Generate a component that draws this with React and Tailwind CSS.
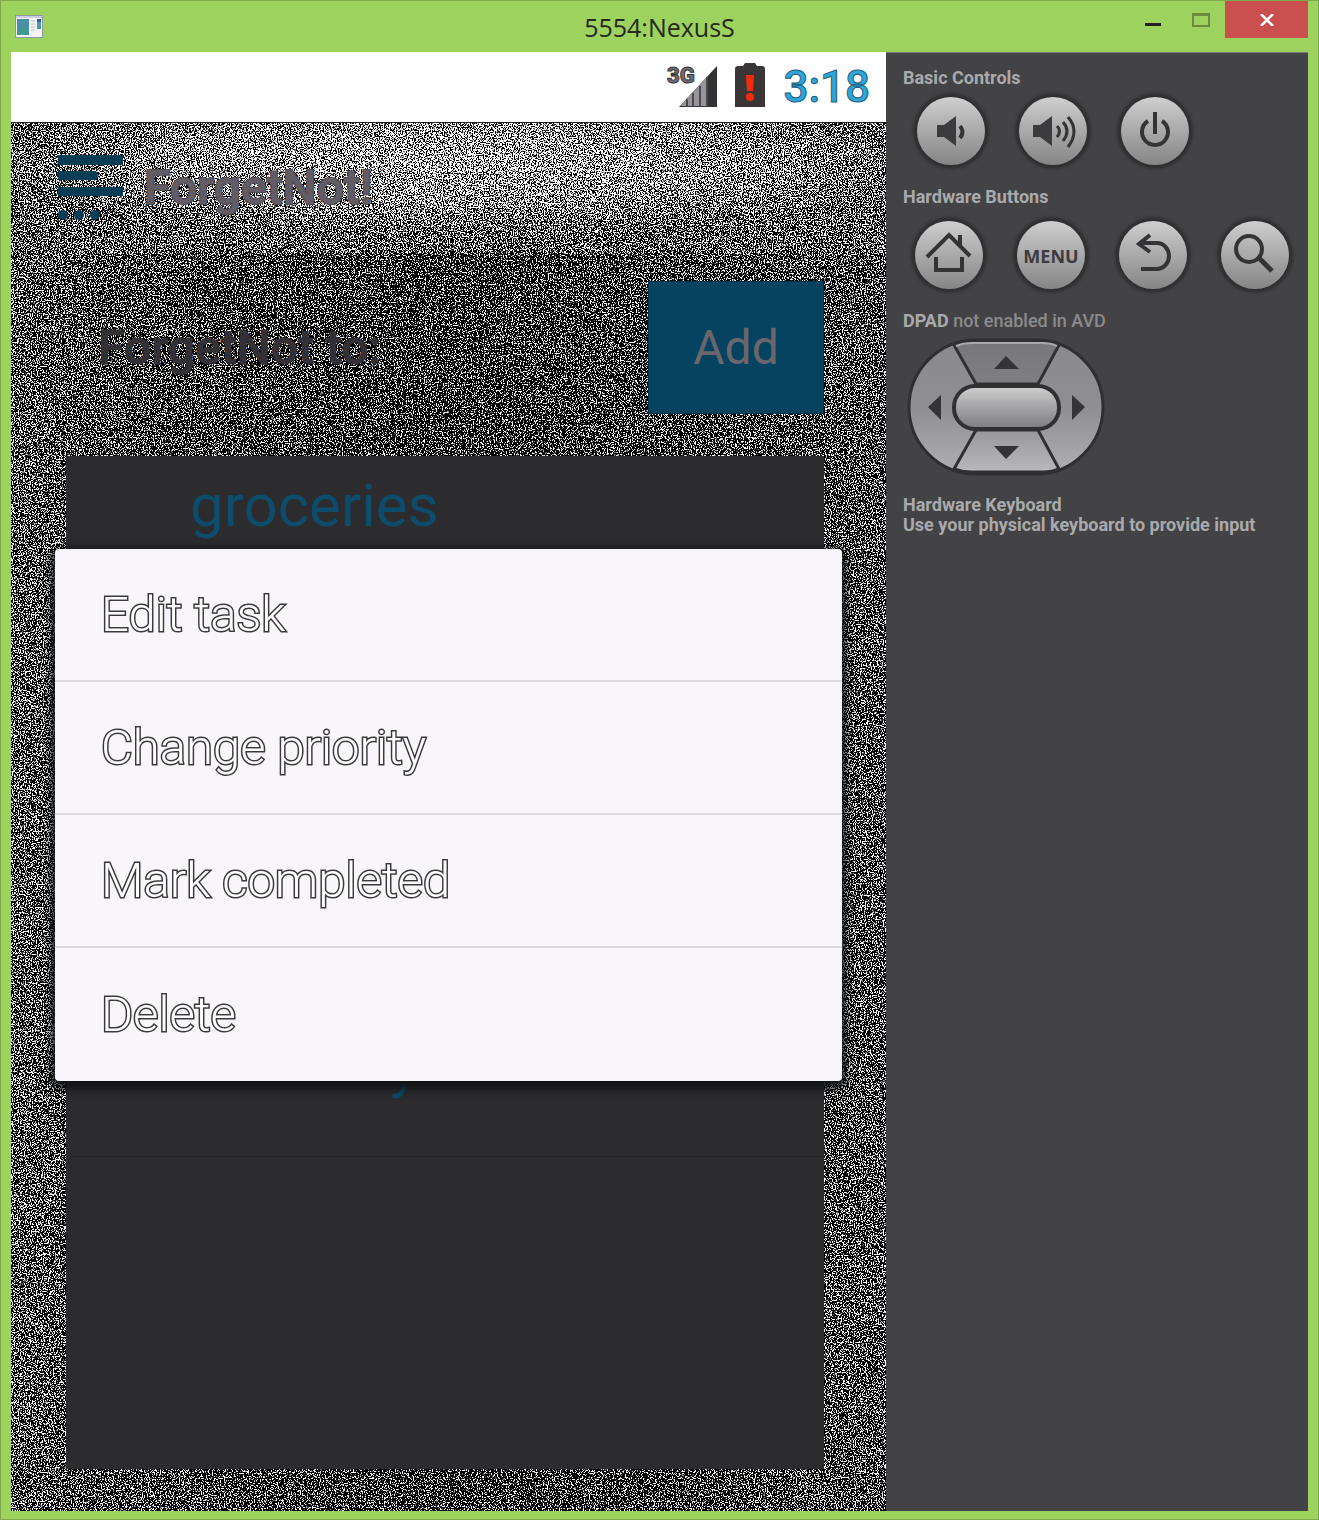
import React from "react";

const glyph = {
  fill: "none",
  stroke: "#343436",
  strokeWidth: 4,
};

function Grain() {
  return (
    <svg className="absolute inset-0 h-full w-full" aria-hidden="true">
      <defs>
        <filter id="grain" x="0" y="0" width="100%" height="100%" colorInterpolationFilters="sRGB">
          <feTurbulence type="fractalNoise" baseFrequency="0.83" numOctaves="2" seed="4" result="n" />
          <feColorMatrix in="n" type="matrix" values="1 0 0 0 0  1 0 0 0 0  1 0 0 0 0  0 0 0 0 1" result="g" />
          <feComposite in="g" in2="SourceGraphic" operator="arithmetic" k1="0" k2="1" k3="1" k4="-0.5" />
          <feComponentTransfer>
            <feFuncR type="linear" slope="14" intercept="-6.5" />
            <feFuncG type="linear" slope="14" intercept="-6.5" />
            <feFuncB type="linear" slope="14" intercept="-6.5" />
          </feComponentTransfer>
        </filter>
        <radialGradient id="headShade" cx="0.52" cy="0.3" r="0.55">
          <stop offset="0" stopColor="#898989" />
          <stop offset="0.6" stopColor="#828282" />
          <stop offset="1" stopColor="#777777" />
        </radialGradient>
        <linearGradient id="bodyShade" x1="0" x2="1" y1="0" y2="0">
          <stop offset="0" stopColor="#757575" />
          <stop offset="0.1" stopColor="#717171" />
          <stop offset="0.5" stopColor="#6b6b6b" />
          <stop offset="0.95" stopColor="#727272" />
          <stop offset="1" stopColor="#727272" />
        </linearGradient>
      </defs>
      <g filter="url(#grain)">
        <rect width="100%" height="100%" fill="url(#bodyShade)" />
        <rect width="100%" height="130" fill="url(#headShade)" />
      </g>
    </svg>
  );
}

function TitleBar() {
  return (
    <header className="grid h-[51px] grid-cols-[1fr_auto_1fr] items-start">
      <svg width="28" height="23" viewBox="0 0 28 23" className="mt-3.5 ml-1" aria-hidden="true">
        <rect x="0.5" y="0.5" width="27" height="22" fill="#f4f4f8" stroke="#8d98a0" />
        <rect x="1" y="1" width="26" height="2" fill="#c9cfe0" />
        <rect x="2" y="4" width="12" height="16" fill="#43988f" />
        <path d="M2 4h12v7L2 17z" fill="#4a8fa4" />
        <path d="M16 6h4M16 9h4M16 12h4M16 15h4" stroke="#b9bdc4" />
        <rect x="22" y="4" width="4" height="10" fill="#4a9aa5" />
        <rect x="22" y="4" width="4" height="3" fill="#2c5f9c" />
      </svg>
      <h1 className="mt-2 font-['Open_Sans',sans-serif] text-[25px] leading-9 text-[#252a1c]">5554:NexusS</h1>
      <div className="flex justify-end">
        <button aria-label="Minimize" className="flex h-[37px] w-12 items-center justify-center">
          <svg width="16" height="12" viewBox="0 0 16 12"><path d="M0 10.500h16" stroke="#222" strokeWidth="3" /></svg>
        </button>
        <button aria-label="Maximize" className="flex h-[37px] w-12 items-center justify-center">
          <svg width="18" height="14" viewBox="0 0 18 14"><path d="M1 1h16v12H1zM1 2h16" fill="none" stroke="#6b8c3e" strokeWidth="2" /></svg>
        </button>
        <button aria-label="Close" className="flex h-[37px] w-[83px] items-center justify-center bg-[#cc4f50]">
          <svg width="14" height="12" viewBox="0 0 14 12"><path d="M1 0l12 12M13 0L1 12" stroke="#fff" strokeWidth="2.500" /></svg>
        </button>
      </div>
    </header>
  );
}

function StatusBar() {
  return (
    <div className="flex h-[70px] items-center justify-end bg-white pr-4">
      <svg width="52" height="48" viewBox="0 0 52 48" role="img" aria-label="3G signal">
        <text x="0" y="20" fontFamily="Roboto, sans-serif" fontWeight="900" fontSize="22" fill="#6f6a70" stroke="#3a383b">3G</text>
        <path d="M12 44L50 3v41z" fill="#333335" />
        <path d="M13 43L40 14v29z" fill="#98959a" />
        <path d="M20 36v8M26 30v14M33 23v21M40 14v30" stroke="#4b494d" strokeWidth="2" />
      </svg>
      <svg width="30" height="44" viewBox="0 0 30 44" className="mb-1 ml-4" role="img" aria-label="Battery low">
        <path d="M0 6q0-3 3-3h5l2-3h10l2 3h5q3 0 3 3v38H0z" fill="#3a3638" />
        <path d="M11 12h8l-1 16h-6z" fill="#f8290a" />
        <circle cx="15" cy="34" r="4" fill="#f8290a" />
      </svg>
      <span className="ml-[18px] font-[Roboto,sans-serif] text-[44px] font-medium text-[#2fa5d8] [-webkit-text-stroke:1px_#205f80]">3:18</span>
    </div>
  );
}

const menuItems = ["Edit task", "Change priority", "Mark completed", "Delete"];

function ContextMenu() {
  return (
    <div role="menu" className="absolute inset-x-11 top-[426px] overflow-hidden rounded bg-[#f8f6fa] shadow-[0_4px_10px_4px_#101214]">
      {menuItems.map((label) => (
        <button
          key={label}
          role="menuitem"
          className="flex h-[133px] w-full items-center border-b-2 border-[#dcd9dd] px-[46px] text-left text-[49px] font-light text-white [-webkit-text-stroke:3px_#3a3a3e] [paint-order:stroke_fill] last:border-b-0"
        >
          {label}
        </button>
      ))}
    </div>
  );
}

function Phone() {
  return (
    <section className="flex min-w-0 flex-col font-[Roboto,sans-serif]">
      <StatusBar />
      <div className="relative flex flex-1 flex-col border-t border-[#222] bg-[#1a1a1a]">
        <Grain />
        <div className="relative flex h-[130px] items-center gap-5 pl-[47px]">
          <svg width="66" height="66" viewBox="0 0 66 66" fill="#083d58" aria-hidden="true">
            <rect width="65" height="10" />
            <path d="M0 16h38q4 4 0 9H0zM0 32h65v9H0z" />
            <circle cx="5" cy="60" r="5" />
            <circle cx="21" cy="60" r="5" />
            <circle cx="37" cy="60" r="5" />
          </svg>
          <h2 className="text-5xl font-medium text-[#625c65] [-webkit-text-stroke:2px_#4d4950] [paint-order:stroke_fill]">ForgetNot!</h2>
        </div>
        <div className="relative mx-[55px] mt-7 flex h-[133px] items-center justify-between pr-[7px] pl-8">
          <span className="text-5xl font-medium text-[#343136] [-webkit-text-stroke:1px_#2b292d] [paint-order:stroke_fill]">ForgetNot to:</span>
          <button className="h-[133px] w-44 border border-[#04304a] bg-[#064361] text-5xl text-[#6b666d]">Add</button>
        </div>
        <ul className="relative mt-[42px] mr-[62px] mb-[42px] ml-[55px] flex-1 bg-[#2c2b2e] text-[60px] leading-[70px] text-[#0d4c6b]">
          <li className="h-[140px] border-b border-[#252527] pt-[15px] pl-[124px]">groceries</li>
          <li className="h-[140px] border-b border-[#252527]" />
          <li className="h-[140px] border-b border-[#252527]" />
          <li className="h-[140px] border-b border-[#252527]" />
          <li className="h-[141px] border-b border-[#252527] pt-[15px] pl-[324px]">y</li>
        </ul>
        <ContextMenu />
      </div>
    </section>
  );
}

function RoundButton({ label, children }) {
  return (
    <button
      aria-label={label}
      className="flex size-[68px] items-center justify-center rounded-full bg-linear-to-b from-[#cfcfcf] to-[#858585] shadow-[0_0_3px_4px_#2f3031]"
    >
      {children}
    </button>
  );
}

function Icon({ children }) {
  return (
    <svg width="68" height="68" viewBox="0 0 68 68" aria-hidden="true" {...glyph}>
      {children}
    </svg>
  );
}

function Speaker({ x }) {
  return <path d={`M${x} 28h7l12-9v30l-12-9h-7z`} fill="#3c3c3f" stroke="none" />;
}

function Dpad() {
  return (
    <svg width="200" height="142" viewBox="0 0 200 142" className="mt-[5px] ml-1" role="img" aria-label="Directional pad">
      <defs>
        <linearGradient id="ring" x1="0" x2="0" y1="0" y2="1">
          <stop offset="0" stopColor="#777779" />
          <stop offset="0.5" stopColor="#858587" />
          <stop offset="1" stopColor="#b9b8ba" />
        </linearGradient>
        <linearGradient id="side" x1="0" x2="0" y1="0" y2="1">
          <stop offset="0" stopColor="#8a8a8c" />
          <stop offset="0.5" stopColor="#8f8f91" />
          <stop offset="1" stopColor="#b0b0b2" />
        </linearGradient>
        <linearGradient id="pill" x1="0" x2="0" y1="0" y2="1">
          <stop offset="0" stopColor="#d0d0d0" />
          <stop offset="0.5" stopColor="#a4a4a6" />
          <stop offset="1" stopColor="#7c7c7e" />
        </linearGradient>
      </defs>
      <rect x="2" y="4" width="194" height="134" rx="67" fill="url(#side)" stroke="#2f2f31" strokeWidth="3" />
      <path d="M47 9Q55 6 64 6h72q9 0 16 3l-21 39H69zM47 133Q55 136 64 136h72q9 0 16-3l-21-39H69z" fill="url(#ring)" stroke="#303032" strokeWidth="3" />
      <path d="M49 10Q56 7 64 7h72q8 0 14 3" fill="none" stroke="#a9a9ab" strokeWidth="2" />
      <rect x="47" y="50" width="105" height="43" rx="21" fill="url(#pill)" stroke="#303032" strokeWidth="4" />
      <path d="M87 33h25L99 20zM87 110h25l-13 13zM34 59v25L21 71zM165 59v25l13-13z" fill="#343436" />
    </svg>
  );
}

function Controls() {
  return (
    <aside className="min-w-0 border-t border-[#777a72] bg-[#434245] pt-[15px] pl-[17px] font-[Roboto,sans-serif] text-lg leading-5 font-bold text-[#aaaaac]">
      <h3>Basic Controls</h3>
      <div className="mt-[9px] flex gap-[34px] pl-3.5">
        <RoundButton label="Volume down">
          <Icon>
            <Speaker x={20} />
            <path d="M43 29q5 6 0 12" />
          </Icon>
        </RoundButton>
        <RoundButton label="Volume up">
          <Icon>
            <Speaker x={14} />
            <path d="M38 29q5 5 0 11M44 25q8 9 0 19M49 20q12 14 0 30" strokeWidth="3" />
          </Icon>
        </RoundButton>
        <RoundButton label="Power">
          <Icon>
            <path d="M27 24a13 13 0 1 0 14 0M34 15v22" />
          </Icon>
        </RoundButton>
      </div>
      <h3 className="mt-[22px]">Hardware Buttons</h3>
      <div className="mt-3.5 flex gap-[34px] pl-3">
        <RoundButton label="Home">
          <Icon>
            <path d="M12 36l22-22 21 21M45 24V14M21 36v13h26V36" />
          </Icon>
        </RoundButton>
        <RoundButton label="Menu">
          <span className="pt-0.5 font-['Open_Sans',sans-serif] text-lg text-[#3c3c3f]">MENU</span>
        </RoundButton>
        <RoundButton label="Back">
          <Icon>
            <path d="M31 14l-11 9 11 8M20 22h18a12 13 0 0 1 0 26H22" />
          </Icon>
        </RoundButton>
        <RoundButton label="Search">
          <Icon>
            <circle cx="28" cy="28" r="13" />
            <path d="M38 37l13 13" strokeWidth="5" />
          </Icon>
        </RoundButton>
      </div>
      <h3 className="mt-[22px]">
        DPAD <span className="font-medium text-[#8b8b8e]">not enabled in AVD</span>
      </h3>
      <Dpad />
      <h3 className="mt-[17px]">Hardware Keyboard</h3>
      <p>Use your physical keyboard to provide input</p>
    </aside>
  );
}

export default function App() {
  return (
    <div className="flex min-h-screen flex-col border border-[#7fa94b] bg-[#9ed25f] px-2.5 pt-0 pb-2">
      <TitleBar />
      <main className="grid flex-1 grid-cols-[875fr_422fr]">
        <Phone />
        <Controls />
      </main>
    </div>
  );
}
